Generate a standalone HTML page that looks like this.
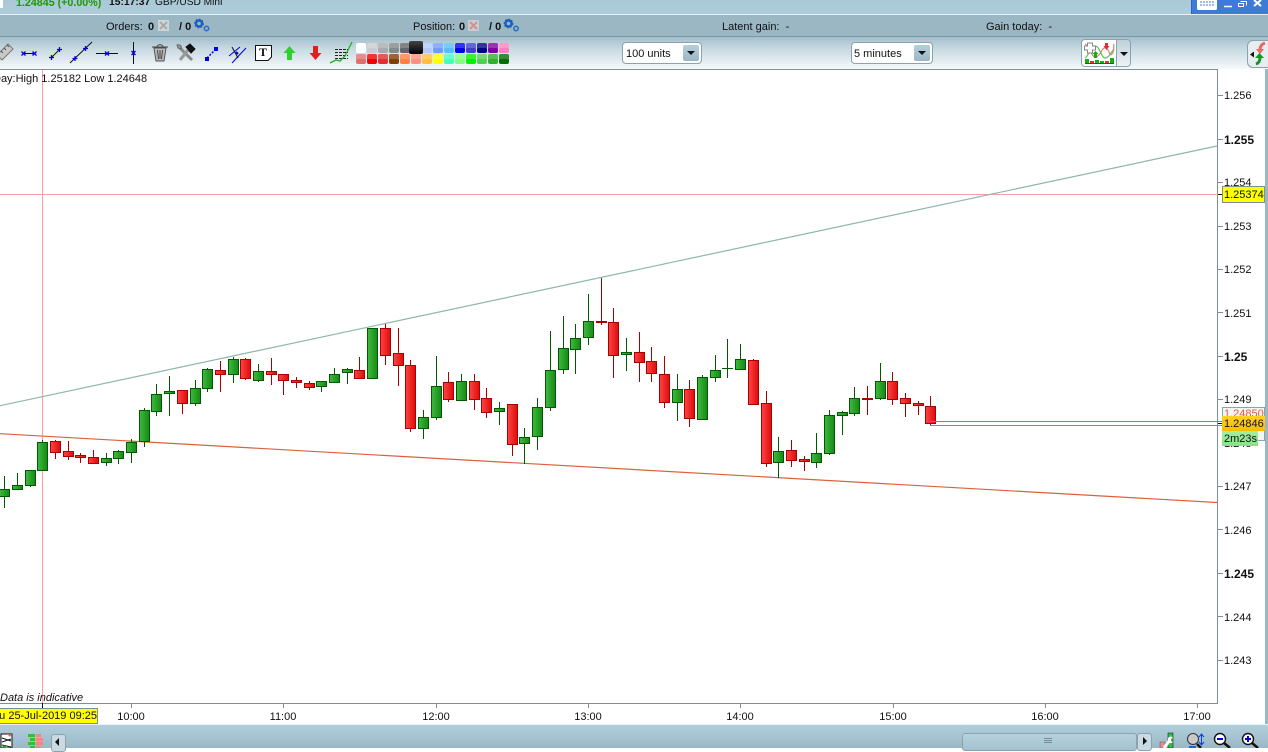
<!DOCTYPE html>
<html><head><meta charset="utf-8"><title>GBP/USD Mini</title>
<style>
html,body{margin:0;padding:0;width:1268px;height:748px;overflow:hidden;background:#fff;font-family:"Liberation Sans",sans-serif;font-size:11px;color:#111}
div,span.a{position:absolute;white-space:nowrap}
svg{position:absolute;left:0;top:0}
.g rect{fill:url(#gg);stroke:#005a00;stroke-width:1;width:10px}
.r rect{fill:url(#rg);stroke:#aa0000;stroke-width:1;width:10px}
.t{line-height:14px;height:14px}
.p{left:1224px;line-height:14px;height:14px;font-size:11px}
.b{font-weight:bold}
.pb{font-weight:bold;font-size:12px}
.x{line-height:14px;height:14px;width:60px;text-align:center;top:710px}
.sw{width:10px;height:10px;border-radius:2px;box-shadow:inset 0 5px 0 rgba(255,255,255,.2)}
.sel{background:#fff;border:1px solid #8ba3af;border-radius:4px;height:20px;top:42px;line-height:22px;box-sizing:content-box}
.arr{background:linear-gradient(#b5cfdb,#9bb8c6);border-radius:2px;width:16px;height:16px;top:2px}
.arr:after{content:"";position:absolute;left:4px;top:6px;border-left:4px solid transparent;border-right:4px solid transparent;border-top:4px solid #111}
</style></head><body>
<!-- header bars -->
<div style="left:0;top:0;width:1268px;height:14px;background:linear-gradient(#a9c8d6,#afcddb)"></div>
<div style="left:0;top:14px;width:1268px;height:1px;background:#e6f0f4"></div>
<div style="left:0;top:15px;width:1268px;height:21px;background:#9bb7c4"></div>
<div style="left:0;top:36px;width:1268px;height:1px;background:#7d97a3"></div>
<div style="left:0;top:37px;width:1268px;height:32px;background:linear-gradient(#a3bfcc 0,#c6d8e0 35%,#f6f9fa 100%)"></div>
<div style="left:0;top:0;width:3px;height:8px;background:#fff"></div>
<div class="t" style="left:16px;top:-4px;color:#1e9a00;font-weight:bold;font-size:10.700px">1.24845 (+0.00%)</div>
<div class="t b" style="left:109px;top:-4px;font-size:10.300px">15:17:37</div>
<div class="t" style="left:155px;top:-4px;font-size:10.200px">GBP/USD Mini</div>
<div class="t" style="left:106px;top:20px">Orders:</div><div class="t b" style="left:148px;top:20px">0</div>
<div class="t b" style="left:179px;top:20px">/ 0</div>
<div class="t" style="left:413px;top:20px">Position:</div><div class="t b" style="left:459px;top:20px">0</div>
<div class="t b" style="left:489px;top:20px">/ 0</div>
<div class="t" style="left:722px;top:20px">Latent gain:&nbsp; -</div>
<div class="t" style="left:986px;top:20px">Gain today:&nbsp; -</div>
<!-- window controls -->
<div style="left:1191px;top:0;width:77px;height:14px;background:#3f7bd6;border-left:1px solid #2b62c0;box-sizing:border-box"></div>

<!-- colour swatches -->
<div class="sw" style="left:356px;top:43px;background:#fff"></div><div class="sw" style="left:367px;top:43px;background:#ccc"></div><div class="sw" style="left:378px;top:43px;background:#aaa"></div><div class="sw" style="left:389px;top:43px;background:#888"></div><div class="sw" style="left:400px;top:43px;background:#666"></div><div class="sw" style="left:422px;top:43px;background:#b4c8ff"></div><div class="sw" style="left:433px;top:43px;background:#709cff"></div><div class="sw" style="left:444px;top:43px;background:#55c0ff"></div><div class="sw" style="left:455px;top:43px;background:#0000f0"></div><div class="sw" style="left:466px;top:43px;background:#4040d0"></div><div class="sw" style="left:477px;top:43px;background:#000090"></div><div class="sw" style="left:488px;top:43px;background:#8000a8"></div><div class="sw" style="left:499px;top:43px;background:#ff80c0"></div>
<div class="sw" style="left:409px;top:41px;width:14px;height:13px;box-shadow:none;background:linear-gradient(#444,#000)"></div>
<div class="sw" style="left:356px;top:54px;background:#e07070"></div><div class="sw" style="left:367px;top:54px;background:#f00000"></div><div class="sw" style="left:378px;top:54px;background:#e03030"></div><div class="sw" style="left:389px;top:54px;background:#804000"></div><div class="sw" style="left:400px;top:54px;background:#ff8040"></div><div class="sw" style="left:411px;top:54px;background:#ff9080"></div><div class="sw" style="left:422px;top:54px;background:#ffc040"></div><div class="sw" style="left:433px;top:54px;background:#ffff00"></div><div class="sw" style="left:444px;top:54px;background:#40ffc0"></div><div class="sw" style="left:455px;top:54px;background:#80ff80"></div><div class="sw" style="left:466px;top:54px;background:#00f000"></div><div class="sw" style="left:477px;top:54px;background:#50d050"></div><div class="sw" style="left:488px;top:54px;background:#30b030"></div><div class="sw" style="left:499px;top:54px;background:#007000"></div>

<!-- selects -->
<div class="sel" style="left:622px;width:78px"><span class="a" style="left:3px">100 units</span><div class="arr" style="left:60px"></div></div>
<div class="sel" style="left:851px;width:80px"><span class="a" style="left:2px">5 minutes</span><div class="arr" style="left:62px"></div></div>
<div style="left:1081px;top:39px;width:48px;height:26px;border:1px solid #8ba3af;border-radius:4px;background:linear-gradient(#bdd0d9,#eef3f5)"></div>
<div style="left:1082px;top:40px;width:34px;height:26px;background:#fff;border-radius:3px 0 0 3px"></div>
<div style="left:1116px;top:40px;width:1px;height:26px;background:#8ba3af"></div>
<div style="left:1120px;top:52px;border-left:4px solid transparent;border-right:4px solid transparent;border-top:4px solid #111"></div>
<div style="left:1247px;top:40px;width:21px;height:28px;background:#e6eef1;border:1px solid #8ba3af;border-right:0;border-radius:6px 0 0 6px;box-sizing:border-box"></div>

<!-- chart canvas -->
<div style="left:1265px;top:69px;width:3px;height:656px;background:#9bb7c4"></div>
<svg width="1268" height="748" viewBox="0 0 1268 748" shape-rendering="auto">
<defs>
<linearGradient id="gg" x1="0" x2="1" y1="0" y2="0"><stop offset="0" stop-color="#3fbb3f"/><stop offset="1" stop-color="#158815"/></linearGradient>
<linearGradient id="rg" x1="0" x2="1" y1="0" y2="0"><stop offset="0" stop-color="#ff4444"/><stop offset="1" stop-color="#dd0c0c"/></linearGradient>
</defs>
<!-- frame -->
<path d="M0 69.5H1217.5V703.5H0" fill="none" stroke="#7d8f99"/>
<!-- ticks -->
<path d="M1218 95.5h5M1218 139.5h5M1218 182.5h5M1218 226.5h5M1218 269.5h5M1218 312.5h5M1218 356.5h5M1218 399.5h5M1218 486.5h5M1218 529.5h5M1218 573.5h5M1218 616.5h5M1218 660.5h5" stroke="#7d8f99"/>
<path d="M131.5 704v4M283.5 704v4M436.5 704v4M588.5 704v4M740.5 704v4M893.5 704v4M1045.5 704v4M1197.5 704v4" stroke="#7d8f99"/>
<path d="M42.5 703v5" stroke="#111"/>
<!-- crosshair -->
<path d="M42.5 70V703M0 194.5H1218" stroke="#ff9c9c"/>
<!-- trend lines -->
<path d="M0 405.7L1217 146" stroke="#8db6ad" stroke-width="1.2" fill="none"/>
<path d="M0 433.7L1217 502.5" stroke="#d9623c" stroke-width="1.2" fill="none"/>
<!-- wicks -->
<path fill="none" stroke="#005a00" d="M4.5 476V508M17.5 473V490M30.5 470V487M42.5 440V471M106.5 453V466M118.5 450V464M131.5 439V463M144.5 408V447M156.5 384V416M169.5 376V416M195.5 380V406M207.5 368V392M233.5 357V383M258.5 364V382M321.5 381V392M334.5 368V383M347.5 368V384M372.5 328V379M423.5 410V439M436.5 356V420M461.5 374V401M499.5 402V425M524.5 428V464M537.5 398V450M550.5 331V411M563.5 316V374M575.5 324V374M588.5 294V345M626.5 338V371M677.5 374V421M702.5 375V420M715.5 355V382M727.5 339V378M722 368.5H733M740.5 344V370M778.5 437V478M816.5 433V468M829.5 410V455M842.5 411V435M854.5 387V416M880.5 363V400"/>
<path fill="none" stroke="#aa0000" d="M55.5 440V459M68.5 441V460M80.5 453V463M93.5 450V464M182.5 390V414M220.5 361V392M245.5 358V380M271.5 358V385M283.5 374V395M296.5 377V388M309.5 381V390M359.5 357V379M385.5 324V365M398.5 328V386M410.5 360V432M448.5 372V402M474.5 374V410M486.5 388V418M512.5 404V456M601.5 278V325M613.5 308V378M639.5 332V382M651.5 347V382M664.5 356V408M689.5 380V427M753.5 359V405M766.5 391V467M791.5 440V467M804.5 456V471M867.5 386V415M892.5 372V405M905.5 393V417M918.5 401V415M930.5 396V426"/>
<!-- bodies -->
<g class="g">
<rect x="-.5" y="489.5" height="7"/><rect x="12.5" y="485.5" height="4"/><rect x="25.5" y="470.5" height="15"/><rect x="37.5" y="442.5" height="28"/><rect x="101.5" y="458.5" height="4"/><rect x="113.5" y="451.5" height="7"/><rect x="126.5" y="442.5" height="10"/><rect x="139.5" y="410.5" height="31"/><rect x="151.5" y="394.5" height="17"/><rect x="164.5" y="391.5" height="2"/><rect x="190.5" y="388.5" height="15"/><rect x="202.5" y="369.5" height="19"/><rect x="228.5" y="359.5" height="15"/><rect x="253.5" y="371.5" height="9"/><rect x="316.5" y="381.5" height="5"/><rect x="329.5" y="374.5" height="8"/><rect x="342.5" y="369.5" height="3"/><rect x="367.5" y="328.5" height="50"/><rect x="418.5" y="417.5" height="11"/><rect x="431.5" y="386.5" height="31"/><rect x="456.5" y="381.5" height="19"/><rect x="494.5" y="408.5" height="3"/><rect x="519.5" y="437.5" height="6"/><rect x="532.5" y="407.5" height="29"/><rect x="545.5" y="370.5" height="37"/><rect x="558.5" y="348.5" height="21"/><rect x="570.5" y="338.5" height="11"/><rect x="583.5" y="321.5" height="16"/><rect x="621.5" y="352.5" height="2"/><rect x="672.5" y="389.5" height="13"/><rect x="697.5" y="377.5" height="42"/><rect x="710.5" y="370.5" height="7"/><rect x="735.5" y="359.5" height="10"/><rect x="773.5" y="451.5" height="11"/><rect x="811.5" y="453.5" height="9"/><rect x="824.5" y="415.5" height="38"/><rect x="837.5" y="412.5" height="3"/><rect x="849.5" y="398.5" height="15"/><rect x="875.5" y="381.5" height="17"/>
</g>
<g class="r">
<rect x="50.5" y="441.5" height="11"/><rect x="63.5" y="451.5" height="5"/><rect x="75.5" y="455.5" height="2"/><rect x="88.5" y="457.5" height="6"/><rect x="177.5" y="390.5" height="13"/><rect x="215.5" y="370.5" height="4"/><rect x="240.5" y="359.5" height="19"/><rect x="266.5" y="371.5" height="3"/><rect x="278.5" y="374.5" height="6"/><rect x="291.5" y="380.5" height="2"/><rect x="304.5" y="383.5" height="4"/><rect x="354.5" y="370.5" height="8"/><rect x="380.5" y="328.5" height="27"/><rect x="393.5" y="353.5" height="12"/><rect x="405.5" y="365.5" height="63"/><rect x="443.5" y="382.5" height="17"/><rect x="469.5" y="381.5" height="18"/><rect x="481.5" y="398.5" height="14"/><rect x="507.5" y="404.5" height="40"/><rect x="596.5" y="321.5" height="1"/><rect x="608.5" y="322.5" height="33"/><rect x="634.5" y="352.5" height="10"/><rect x="646.5" y="361.5" height="12"/><rect x="659.5" y="374.5" height="28"/><rect x="684.5" y="389.5" height="29"/><rect x="748.5" y="360.5" height="44"/><rect x="761.5" y="403.5" height="60"/><rect x="786.5" y="450.5" height="10"/><rect x="799.5" y="459.5" height="2"/><rect x="862.5" y="398.5" height="1"/><rect x="887.5" y="381.5" height="18"/><rect x="900.5" y="398.5" height="5"/><rect x="913.5" y="403.5" height="2"/><rect x="925.5" y="406.5" height="17"/>
</g>
<!-- price level lines -->
<path d="M930 421.5H1222" stroke="#d9623c"/>
<path d="M930 425.5H1222" stroke="#888"/>
<path d="M1218 423.5h4" stroke="#111"/>
<path d="M1218 194.5h4" stroke="#111"/>

<!-- toolbar icons -->
<g fill="none" stroke-linecap="butt">
<!-- order / position close boxes -->
<rect x="158" y="20" width="11" height="11" fill="#cfd6d8"/><path d="M160 22l7 7m0-7l-7 7" stroke="#a9a9a9" stroke-width="2"/>
<rect x="468" y="20" width="11" height="11" fill="#c9cdd2"/><path d="M470 22l7 7m0-7l-7 7" stroke="#d89090" stroke-width="2"/>
<!-- ruler -->
<path d="M-3 55L8 44L13 49L2 60Z" fill="#c9c9c9" stroke="#777"/>
<path d="M1 51l2 2M4 48l2 2M7 45l2 2" stroke="#555"/>
<!-- h segment -->
<path d="M24 53.5H35" stroke="#111"/><path d="M21.500 51.500l4 4m0-4l-4 4M32.500 51.500l4 4m0-4l-4 4" stroke="#0000e0" stroke-width="1.3"/>
<!-- segment -->
<path d="M51 58L60 49" stroke="#111"/><path d="M49 57.500h5M51.500 55v5M57 49.500h5M59.500 47v5" stroke="#0000e0" stroke-width="1.3"/>
<!-- extended line -->
<path d="M70 63L92 42" stroke="#111"/><path d="M72.500 58.500h5M75 56v5M83 48.500h5M85.500 46v5" stroke="#0000e0" stroke-width="1.3"/>
<!-- horizontal -->
<path d="M96 53.500H118" stroke="#111"/><path d="M105 51.500l4 4m0-4l-4 4" stroke="#0000e0" stroke-width="1.3"/>
<!-- vertical -->
<path d="M133.500 42V64" stroke="#111"/><path d="M131.500 51l4 4m0-4l-4 4" stroke="#0000e0" stroke-width="1.3"/>
<!-- trash -->
<path d="M154 48L156 61H164L166 48Z" fill="#b9b9b9" stroke="#555"/><path d="M152 47H168M157 47c0-3 6-3 6 0M157.500 50l1 9M160 50v9M162.500 50l-1 9" stroke="#444"/>
<!-- tools -->
<path d="M179 47L192 60" stroke="#8a8a8a" stroke-width="3"/><path d="M177 45c3-1 5 1 4 4l-3-1z" fill="#999" stroke="#666"/>
<path d="M180 60L189 49" stroke="#9a9a9a" stroke-width="3"/><path d="M186 47l4-3 5 5-4 4z" fill="#111" stroke="#111"/>
<!-- dots line -->
<path d="M207 58L216 49" stroke="#0000e0" stroke-dasharray="2 1.500" stroke-width="1.500"/><rect x="205" y="57" width="4" height="4" fill="#0000e0"/><rect x="214" y="47" width="4" height="4" fill="#0000e0"/>
<!-- parallel -->
<path d="M229 56L240 47M232 63L246 48" stroke="#0000e0"/><path d="M232 47L238 58" stroke="#111"/><path d="M236 52l2 2" stroke="#0000e0" stroke-width="2"/>
<!-- T box -->
<path d="M255.500 45.500H271.500V57L268 60.500H255.500Z" fill="#fff" stroke="#111"/>
<!-- arrows -->
<path d="M289.500 46L295.500 53H292V60H287V53H283.500Z" fill="#30d030"/>
<path d="M315.500 60L321.500 53H318V46H313V53H309.500Z" fill="#e81c1c"/>
<!-- drawing chart icon -->
<path d="M335 49.500h13M335 52.500h13M335 55.500h13M335 58.500h13" stroke="#222" stroke-dasharray="3 1"/>
<path d="M330 63l6-3 4 1 5-5 3-6 4-8" stroke="#20b020" stroke-width="1.300"/>

<!-- window buttons -->
<path d="M1197 0H1217V9L1216 10H1198L1197 9Z" fill="#fff"/>
<path d="M1200 2h14M1200 5h14" stroke="#3f7bd6" stroke-dasharray="2 1"/>
<path d="M1224 6.500H1232" stroke="#fff" stroke-width="1.500"/>
<path d="M1240.500 1.500h6v4M1238.500 3.500h5v3h-5z" stroke="#fff"/>
<path d="M1254 0L1261 6M1261 0L1254 6" stroke="#fff" stroke-width="2"/>

<!-- gears -->
<circle cx="199" cy="23.500" r="3" stroke="#1c5fc0" stroke-width="2.400"/><circle cx="199" cy="23.500" r="4.300" stroke="#1c5fc0" stroke-width="1.200" stroke-dasharray="1.800 1.500"/>
<circle cx="206.500" cy="28.500" r="2.200" stroke="#2a70cc" stroke-width="1.600"/>
<circle cx="508.500" cy="23.500" r="3" stroke="#1c5fc0" stroke-width="2.400"/><circle cx="508.500" cy="23.500" r="4.300" stroke="#1c5fc0" stroke-width="1.200" stroke-dasharray="1.800 1.500"/>
<circle cx="516" cy="28.500" r="2.200" stroke="#2a70cc" stroke-width="1.600"/>

<!-- indicator button icon -->
<path d="M1085 44c5 2 6 14 11 13s6-11 10-9 3 9 6 6 1-7 2-10" stroke="#e37a7a" stroke-width="1.200"/>
<path d="M1085 58c4-2 5-12 10-12s6 12 10 12 6-6 9-9" stroke="#60c060" stroke-width="1.200"/>
<path d="M1087.500 43h5v3h3v4h-3v3h-5v-3h-3v-4h3z" fill="#fff" stroke="#888"/>
<rect x="1085" y="59" width="4" height="4" fill="#10b010"/><rect x="1090" y="61" width="4" height="2" fill="#e03030"/><rect x="1095" y="60" width="4" height="3" fill="#10b010"/><rect x="1100" y="61" width="4" height="2" fill="#10b010"/><rect x="1105" y="61" width="4" height="2" fill="#e03030"/><rect x="1110" y="58" width="4" height="5" fill="#10b010"/>
<path d="M1085 63.500h29" stroke="#2040c0"/>
<path d="M1094 54h3v4h-3zM1095.500 51l3 3h-6z" fill="#10b010"/><path d="M1105 43h3v3h-3zM1106.500 50l3-4h-6z" fill="#e03030"/>

<!-- right tab icon -->
<path d="M1250 54.500l4-3v6z" fill="#111"/>
<path d="M1265 43C1262 44 1260 46 1260 50" stroke="#ee6666" stroke-width="3"/><path d="M1256 49h8l-4 5z" fill="#ee6666"/>
<path d="M1256 64C1259 63 1260 61 1260 57" stroke="#109a20" stroke-width="3"/><path d="M1255 58h9l-4.500-5z" fill="#109a20"/>
</g>
</svg>
<div style="left:263px;top:47px;width:0;height:0"><span class="a" style="left:-4px;top:-2px;font:bold 12px/14px 'Liberation Serif',serif;color:#111">T</span></div>

<!-- chart text -->
<div class="t" style="left:-7px;top:72px">Day:High 1.25182 Low 1.24648</div>
<div class="t" style="left:0;top:691px;font-style:italic">Data is indicative</div>
<div class="p" style="top:89px">1.256</div>
<div class="p pb" style="top:133px">1.255</div>
<div class="p" style="top:176px">1.254</div>
<div class="p" style="top:220px">1.253</div>
<div class="p" style="top:263px">1.252</div>
<div class="p" style="top:307px">1.251</div>
<div class="p pb" style="top:350px">1.25</div>
<div class="p" style="top:393px">1.249</div>
<div class="p" style="top:437px">1.248</div>
<div class="p" style="top:480px">1.247</div>
<div class="p" style="top:524px">1.246</div>
<div class="p pb" style="top:567px">1.245</div>
<div class="p" style="top:611px">1.244</div>
<div class="p" style="top:654px">1.243</div>
<!-- price labels -->
<div style="left:1222px;top:186px;width:41px;height:15px;border:1px solid #7d8f99;background:#ffff00;line-height:16px;text-indent:1px">1.25374</div>
<div style="left:1222px;top:407px;width:41px;height:32px;border:1px solid #8ba3af;background:#f4f4f6;line-height:13px;color:#e85c30;text-indent:1px;overflow:hidden">1.24850</div>
<div style="left:1222px;top:416px;width:43px;height:15px;background:linear-gradient(#ffd21e,#f6bc00);line-height:16px;text-indent:2px">1.24846</div>
<div style="left:1222px;top:431px;width:36px;height:15px;background:linear-gradient(#a5f0a0,#88e088);line-height:16px;text-indent:2px">2m23s</div>
<!-- time axis -->
<div style="left:0;top:708px;width:97px;height:14px;border:1px solid #7d8f99;border-left:0;background:#ffff00;overflow:hidden"><span class="a" style="right:0;top:0;line-height:15px">Thu 25-Jul-2019 09:25</span></div>
<div class="x" style="left:101px">10:00</div><div class="x" style="left:253px">11:00</div><div class="x" style="left:406px">12:00</div><div class="x" style="left:558px">13:00</div><div class="x" style="left:710px">14:00</div><div class="x" style="left:863px">15:00</div><div class="x" style="left:1015px">16:00</div><div class="x" style="left:1167px">17:00</div>

<!-- bottom bar -->
<div style="left:0;top:724px;width:1268px;height:1px;background:#e8f1f5"></div>
<div style="left:0;top:725px;width:1268px;height:23px;background:linear-gradient(#b0cedc,#9cb8c6)"></div>
<div style="left:51px;top:734px;width:13px;height:16px;border:1px solid #8ba3af;border-radius:3px;background:#c9dae2"></div>
<div style="left:55px;top:738px;border-top:4px solid transparent;border-bottom:4px solid transparent;border-right:4px solid #111"></div>
<div style="left:962px;top:733px;width:173px;height:16px;border:1px solid #8ba3af;border-radius:3px;background:linear-gradient(#b6d2de,#a4c2d0)"></div>
<div style="left:1044px;top:738px;width:8px;height:1px;background:#788c96;box-shadow:0 2px 0 #788c96,0 4px 0 #788c96"></div>
<div style="left:1137px;top:733px;width:13px;height:16px;border:1px solid #8ba3af;border-radius:3px;background:#c9dae2"></div>
<div style="left:1143px;top:737px;border-top:4px solid transparent;border-bottom:4px solid transparent;border-left:4px solid #111"></div>
<svg width="1268" height="748" viewBox="0 0 1268 748" style="pointer-events:none">
<g fill="none">
<!-- list icon -->
<rect x="1" y="734" width="11" height="14" fill="#fff" stroke="#111"/>
<path d="M2 738l9 3M2 742l9-3M2 745l9 2" stroke="#111"/><path d="M7 734h5l-2 3z" fill="#e06060"/><path d="M1 748l3-3 3 3z" fill="#20a020"/>
<!-- stack icon -->
<rect x="28" y="734" width="7" height="3" fill="#30c030"/><rect x="36" y="734" width="5" height="3" fill="#e88"/>
<rect x="30" y="738" width="5" height="3" fill="#30c030"/><rect x="36" y="738" width="7" height="3" fill="#e88"/>
<rect x="28" y="742" width="7" height="3" fill="#30c030"/><rect x="36" y="742" width="7" height="3" fill="#e88"/>
<rect x="30" y="746" width="5" height="2" fill="#30c030"/><rect x="36" y="746" width="5" height="2" fill="#e88"/>
<!-- wrench candle -->
<rect x="1168" y="733" width="5" height="15" fill="#30c040" stroke="#222" stroke-width=".6"/>
<rect x="1160" y="742" width="5" height="6" fill="#e88" stroke="#666" stroke-width=".6"/>
<path d="M1164 748L1170 740" stroke="#fff" stroke-width="3"/><path d="M1168 738c2-2 4-2 5 0l-2 1v2l2 1c-2 2-5 1-5-1z" fill="#fff"/>
<!-- fit zoom -->
<circle cx="1193" cy="739" r="5.500" fill="#c9c9c9" stroke="#333"/><path d="M1197 744l4 4" stroke="#111" stroke-width="2.500"/>
<path d="M1201.500 735v9M1199 737l2.500-3 2.500 3M1199 742l2.500 3 2.500-3" stroke="#0040e0"/><path d="M1189 747h7" stroke="#0040e0" stroke-width="1.500"/>
<!-- zoom minus -->
<circle cx="1220" cy="739" r="5.500" fill="#fff" stroke="#111" stroke-width="1.400"/><path d="M1224 743l6 5" stroke="#111" stroke-width="2.500"/><path d="M1217 739h6" stroke="#0000e0" stroke-width="2"/>
<!-- zoom plus -->
<circle cx="1248" cy="739" r="5.500" fill="#fff" stroke="#111" stroke-width="1.400"/><path d="M1252 743l6 5" stroke="#111" stroke-width="2.500"/><path d="M1245 739h6M1248 736v6" stroke="#0000e0" stroke-width="2"/>
</g>
</svg>
</body></html>
